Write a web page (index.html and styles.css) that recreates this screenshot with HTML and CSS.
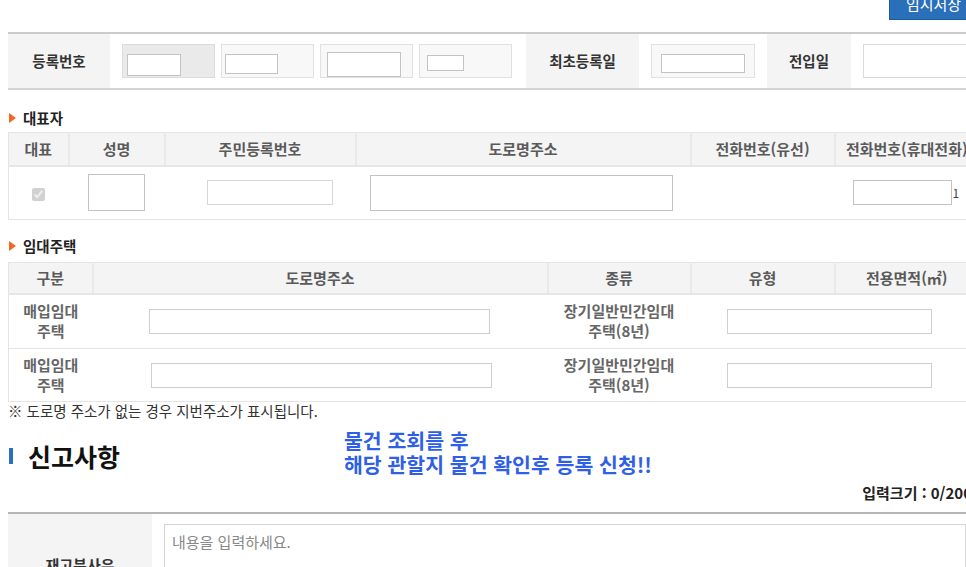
FILE: index.html
```html
<!DOCTYPE html>
<html lang="ko">
<head>
  <meta charset="UTF-8">
  <title>임대사업자 신고</title>
  <link rel="stylesheet" href="styles.css">
</head>
<body>
  <div class="wrap">
    <div class="top-bar">
      <button type="button" class="btn-save">임시저장</button>
    </div>

    <!-- 등록 정보 -->
    <table class="tbl-reg">
      <colgroup>
        <col class="c-102"><col class="c-416"><col class="c-113"><col class="c-128"><col class="c-84"><col class="c-127">
      </colgroup>
      <tr>
        <th>등록번호</th>
        <td>
          <div class="reg-boxes">
            <span class="box box-off"><input type="text" class="in-a"></span>
            <span class="box"><input type="text" class="in-b"></span>
            <span class="box"><input type="text" class="in-c"></span>
            <span class="box"><input type="text" class="in-d"></span>
          </div>
        </td>
        <th>최초등록일</th>
        <td><span class="box box-date"><input type="text" class="in-date"></span></td>
        <th>전입일</th>
        <td><span class="box box-plain"></span></td>
      </tr>
    </table>

    <!-- 대표자 -->
    <h3 class="sec-title">대표자</h3>
    <table class="tbl-list">
      <colgroup>
        <col class="c-60"><col class="c-96"><col class="c-191"><col class="c-335"><col class="c-144"><col class="c-144">
      </colgroup>
      <tr>
        <th>대표</th>
        <th>성명</th>
        <th>주민등록번호</th>
        <th>도로명주소</th>
        <th>전화번호(유선)</th>
        <th>전화번호(휴대전화)</th>
      </tr>
      <tr class="row-rep">
        <td><input type="checkbox" checked disabled></td>
        <td><input type="text" class="in-name"></td>
        <td class="left"><input type="text" class="in-jumin"></td>
        <td class="left"><input type="text" class="in-addr"></td>
        <td></td>
        <td class="left"><div class="mobile"><input type="text" class="in-mobile"><span class="caret">1</span></div></td>
      </tr>
    </table>

    <!-- 임대주택 -->
    <h3 class="sec-title sec-house">임대주택</h3>
    <table class="tbl-list tbl-house">
      <colgroup>
        <col class="c-84"><col class="c-455"><col class="c-143"><col class="c-144"><col class="c-144">
      </colgroup>
      <tr>
        <th>구분</th>
        <th>도로명주소</th>
        <th>종류</th>
        <th>유형</th>
        <th>전용면적(㎡)</th>
      </tr>
      <tr class="row-house">
        <td class="txt">매입임대<br>주택</td>
        <td class="left"><input type="text" class="in-house"></td>
        <td class="txt">장기일반민간임대<br>주택(8년)</td>
        <td class="left" colspan="2"><input type="text" class="in-type"></td>
      </tr>
      <tr class="row-house row-last">
        <td class="txt">매입임대<br>주택</td>
        <td class="left"><input type="text" class="in-house in-house2"></td>
        <td class="txt">장기일반민간임대<br>주택(8년)</td>
        <td class="left" colspan="2"><input type="text" class="in-type"></td>
      </tr>
    </table>
    <p class="note">※ 도로명 주소가 없는 경우 지번주소가 표시됩니다.</p>

    <!-- 신고사항 -->
    <div class="report-head">
      <h2 class="report-title">신고사항</h2>
      <p class="notice">물건 조회를 후<br>해당 관할지 물건 확인후 등록 신청!!</p>
    </div>
    <p class="count">입력크기 : 0/200</p>

    <table class="tbl-form">
      <colgroup>
        <col class="c-144"><col>
      </colgroup>
      <tr>
        <th>재고분사유</th>
        <td><textarea placeholder="내용을 입력하세요."></textarea></td>
      </tr>
    </table>
  </div>
</body>
</html>
```

FILE: styles.css
```css
/* 기본 */
* {
  box-sizing: border-box;
}
html {
  overflow: hidden;
}
body {
  margin: 0;
  font-family: "Noto Sans CJK KR", "Noto Sans", sans-serif;
  font-size: 14px;
  color: #333;
  background: #fff;
}
.wrap {
  width: 970px;
  margin-left: 8px;
}
input {
  display: block;
  border: 1px solid #c3c3c3;
  background: #fff;
  padding: 0;
  margin: 0;
}

/* 상단 버튼 */
.top-bar {
  height: 20px;
  display: flex;
  justify-content: flex-end;
  align-items: flex-end;
}
.btn-save {
  flex-shrink: 0;
  width: 89px;
  height: 34px;
  padding: 0;
  background: #2a6fba;
  border: 1px solid #1e5b9d;
  color: #fff;
  font-family: inherit;
  font-size: 15px;
}

/* 공통 테이블 */
table {
  width: 970px;
  border-collapse: collapse;
  table-layout: fixed;
}
th, td {
  padding: 0;
}
.c-60 { width: 60px; }
.c-84 { width: 84px; }
.c-96 { width: 96px; }
.c-102 { width: 102px; }
.c-113 { width: 113px; }
.c-127 { width: 127px; }
.c-128 { width: 128px; }
.c-143 { width: 143px; }
.c-144 { width: 144px; }
.c-191 { width: 191px; }
.c-335 { width: 335px; }
.c-416 { width: 416px; }
.c-455 { width: 455px; }

/* 등록 정보 */
.tbl-reg {
  margin-top: 12px;
  border-top: 2px solid #cbcbcb;
  border-bottom: 2px solid #d3d3d3;
}
.tbl-reg th {
  height: 56px;
  line-height: 20px;
  background: #f4f4f4;
  color: #333;
  font-size: 14.5px;
  font-weight: bold;
}
.tbl-reg td {
  padding: 0 12px;
}
.reg-boxes {
  display: flex;
  gap: 6px;
}
.box {
  display: flex;
  align-items: flex-start;
  width: 93px;
  height: 34px;
  border: 1px solid #e1e1e1;
  background: #f8f8f8;
}
.box-off {
  background: #eaeaea;
  border-color: #dcdcdc;
}
.box-date {
  width: 104px;
}
.box-plain {
  width: 104px;
  background: #fff;
  border-color: #dadada;
}
.in-a { width: 54px; height: 22px; margin: 9px 0 0 4px; }
.in-b { width: 53px; height: 20px; margin: 9px 0 0 3px; }
.in-c { width: 74px; height: 25px; margin: 7px 0 0 6px; }
.in-d { width: 37px; height: 16px; margin: 10px 0 0 7px; }
.in-date { width: 84px; height: 19px; margin: 9px 0 0 9px; }

/* 섹션 제목 */
.sec-title {
  display: flex;
  align-items: center;
  margin: 18px 0 4px;
  line-height: 20px;
  font-size: 14.5px;
  font-weight: bold;
  color: #222;
}
.sec-title::before {
  content: "";
  border-left: 7px solid #f26522;
  border-top: 5px solid transparent;
  border-bottom: 5px solid transparent;
  margin: 0 7px 0 1px;
}
.sec-house {
  margin: 16px 0 6px;
}

/* 목록 테이블 */
.tbl-list {
  border: 1px solid #e4e4e4;
}
.tbl-list th {
  height: 33px;
  line-height: 20px;
  background: #f4f4f4;
  color: #5a5a5a;
  font-size: 15px;
  font-weight: bold;
  border-left: 2px solid #e9e9e9;
  border-bottom: 2px solid #e6e6e6;
}
.tbl-house th {
  height: 31px;
}
.tbl-list th:first-child {
  border-left: 0;
}
.tbl-list td {
  text-align: center;
  border-bottom: 1px solid #e4e4e4;
}
.tbl-list td.left {
  text-align: left;
}
.tbl-list td.txt {
  color: #666;
  font-size: 15px;
  font-weight: bold;
  line-height: 20px;
}
.row-rep td {
  height: 54px;
}
.row-rep input[type="checkbox"] {
  display: inline-block;
  margin: 0;
  vertical-align: middle;
}
.in-name { width: 57px; height: 37px; margin: 0 auto; }
.in-jumin { width: 126px; height: 25px; margin-left: 42px; border-color: #d6d6d6; }
.in-addr { width: 303px; height: 36px; margin-left: 14px; }
.mobile {
  display: flex;
  align-items: center;
  margin-left: 18px;
}
.in-mobile { width: 99px; height: 25px; }
.caret {
  margin-left: 1px;
  font-size: 12px;
  line-height: 14px;
  color: #444;
}
.row-house td {
  height: 55px;
}
.row-house.row-last td {
  height: 53px;
}
.in-house { width: 341px; height: 25px; margin-left: 56px; border-color: #cfcfcf; }
.in-house2 { margin-left: 58px; }
.in-type { width: 205px; height: 25px; margin-left: 36px; border-color: #cfcfcf; }

.note {
  margin: 0;
  line-height: 18px;
  font-size: 14.5px;
  color: #333;
}

/* 신고사항 */
.report-head {
  display: flex;
  align-items: flex-start;
  margin-top: 8px;
}
.report-title {
  display: flex;
  align-items: center;
  width: 336px;
  margin: 11px 0 0;
  line-height: 34px;
  font-size: 25px;
  font-weight: bold;
  color: #111;
}
.report-title::before {
  content: "";
  width: 4px;
  height: 16px;
  background: #2a70bf;
  margin: 0 15px 0 1px;
}
.notice {
  margin: 0;
  line-height: 24px;
  font-size: 20.5px;
  font-weight: bold;
  color: #2f5fe6;
}
.count {
  margin: 8px 6px 0 0;
  text-align: right;
  line-height: 18px;
  font-size: 15px;
  font-weight: bold;
  color: #222;
}

/* 입력 폼 */
.tbl-form {
  margin-top: 10px;
  border-top: 2px solid #b5b5b5;
}
.tbl-form th {
  background: #f4f4f4;
  color: #333;
  font-size: 15px;
  font-weight: bold;
}
.tbl-form td {
  padding: 10px 12px;
}
.tbl-form textarea {
  display: block;
  width: 100%;
  height: 80px;
  padding: 6px 7px;
  border: 1px solid #d5d5d5;
  font-family: inherit;
  font-size: 15px;
  resize: none;
}
.tbl-form textarea::placeholder {
  color: #888;
}
```
